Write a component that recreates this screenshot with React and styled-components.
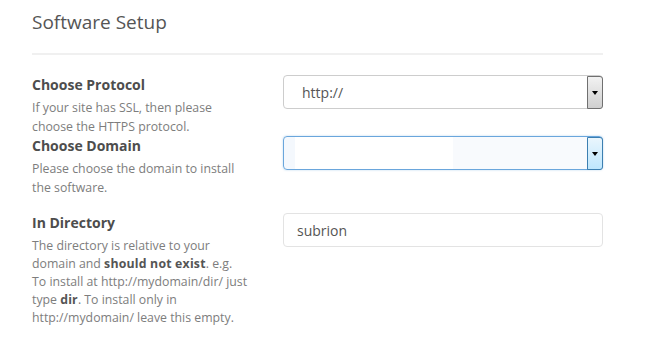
import React from 'react'
import styled, { createGlobalStyle } from 'styled-components'

const GlobalStyle = createGlobalStyle`
  html, body {
    margin: 0;
    padding: 0;
    background: #fff;
  }
  body {
    font-family: "Open Sans", "Liberation Sans", sans-serif;
  }
`

const fields = [
  {
    id: 'protocol',
    title: 'Choose Protocol',
    desc: <>If your site has SSL, then please choose the HTTPS protocol.</>,
    kind: 'select',
    value: 'http://',
    after: 0,
  },
  {
    id: 'domain',
    title: 'Choose Domain',
    desc: <>Please choose the domain to install the software.</>,
    kind: 'select',
    value: '',
    focused: true,
    after: 16,
  },
  {
    id: 'directory',
    title: 'In Directory',
    desc: (
      <>
        The directory is relative to your domain and <b>should not exist</b>. e.g.
        To{'\u00a0'}install at http://mydomain/dir/ just type <b>dir</b>. To install only in
        http://mydomain/ leave this empty.
      </>
    ),
    kind: 'input',
    value: 'subrion',
    after: 0,
  },
]

function App() {
  return (
    <Page>
      <GlobalStyle />
      <Title>Software Setup</Title>
      <Rule />
      <Form>
        {fields.map((f) => (
          <Row key={f.id} $after={f.after}>
            <Label>
              <Heading>{f.title}</Heading>
              <Desc $lh={f.kind === 'input' ? 18 : 18.5}>{f.desc}</Desc>
            </Label>
            <Control>
              {f.kind === 'select' ? (
                <Select $focused={f.focused}>
                  <SelectValue>{f.value}</SelectValue>
                  <DropButton $focused={f.focused}>
                    <Arrow />
                  </DropButton>
                </Select>
              ) : (
                <TextBox>{f.value}</TextBox>
              )}
            </Control>
          </Row>
        ))}
      </Form>
    </Page>
  )
}

const Page = styled.div`
  width: 571px;
  padding: 10px 0 0 32px;
`

const Title = styled.h2`
  margin: 0;
  font-size: 19px;
  line-height: 24px;
  font-weight: 400;
  color: #555;
`

const Rule = styled.div`
  height: 2px;
  background: #f0f0f0;
  margin-top: 19px;
`

const Form = styled.div`
  display: flex;
  flex-direction: column;
  padding-top: 20px;
`

const Row = styled.div`
  display: flex;
  justify-content: space-between;
  align-items: flex-start;
  margin-bottom: ${(p) => p.$after}px;
`

const Label = styled.div`
  width: 218px;
  padding-top: 1px;
`

const Heading = styled.div`
  font-size: 14px;
  line-height: 18px;
  font-weight: 700;
  color: #4d4d4d;
  margin-bottom: 5px;
`

const Desc = styled.div`
  font-size: 12.3px;
  line-height: ${(p) => p.$lh}px;
  color: #7d7d7d;

  b {
    color: #555;
    font-weight: 700;
    letter-spacing: 0.2px;
  }
`

const Control = styled.div`
  width: 320px;
`

const Select = styled.div`
  position: relative;
  box-sizing: border-box;
  height: 34px;
  display: flex;
  align-items: center;
  border: 1px solid ${(p) => (p.$focused ? '#6aa6dc' : '#cdcdcd')};
  border-radius: 4px;
  background: ${(p) =>
    p.$focused
      ? 'linear-gradient(to right, #f4f8fd 0, #f4f8fd 11px, #fff 11px, #fff 169px, #f8fafd 169px)'
      : '#fff'};
  box-shadow: ${(p) => (p.$focused ? '0 0 2px rgba(102,166,220,0.5)' : 'none')};
`

const SelectValue = styled.span`
  padding-left: 18px;
  font-size: 14px;
  color: #555;
`

const DropButton = styled.div`
  position: absolute;
  top: 0;
  right: -1px;
  bottom: -1px;
  width: 16px;
  box-sizing: border-box;
  display: flex;
  align-items: center;
  justify-content: center;
  border: 1px solid ${(p) => (p.$focused ? '#3c7fb1' : '#707070')};
  border-radius: 0 3px 3px 0;
  background: ${(p) =>
    p.$focused
      ? 'linear-gradient(#eaf6fd, #bee6fd)'
      : 'linear-gradient(#f2f2f2, #cfcfcf)'};
`

const Arrow = styled.span`
  width: 0;
  height: 0;
  border-left: 3.5px solid transparent;
  border-right: 3.5px solid transparent;
  border-top: 4px solid #000;
`

const TextBox = styled.div`
  box-sizing: border-box;
  height: 34px;
  display: flex;
  align-items: center;
  padding-left: 13px;
  border: 1px solid #e3e3e3;
  border-radius: 4px;
  font-size: 14px;
  color: #555;
`

export default App
